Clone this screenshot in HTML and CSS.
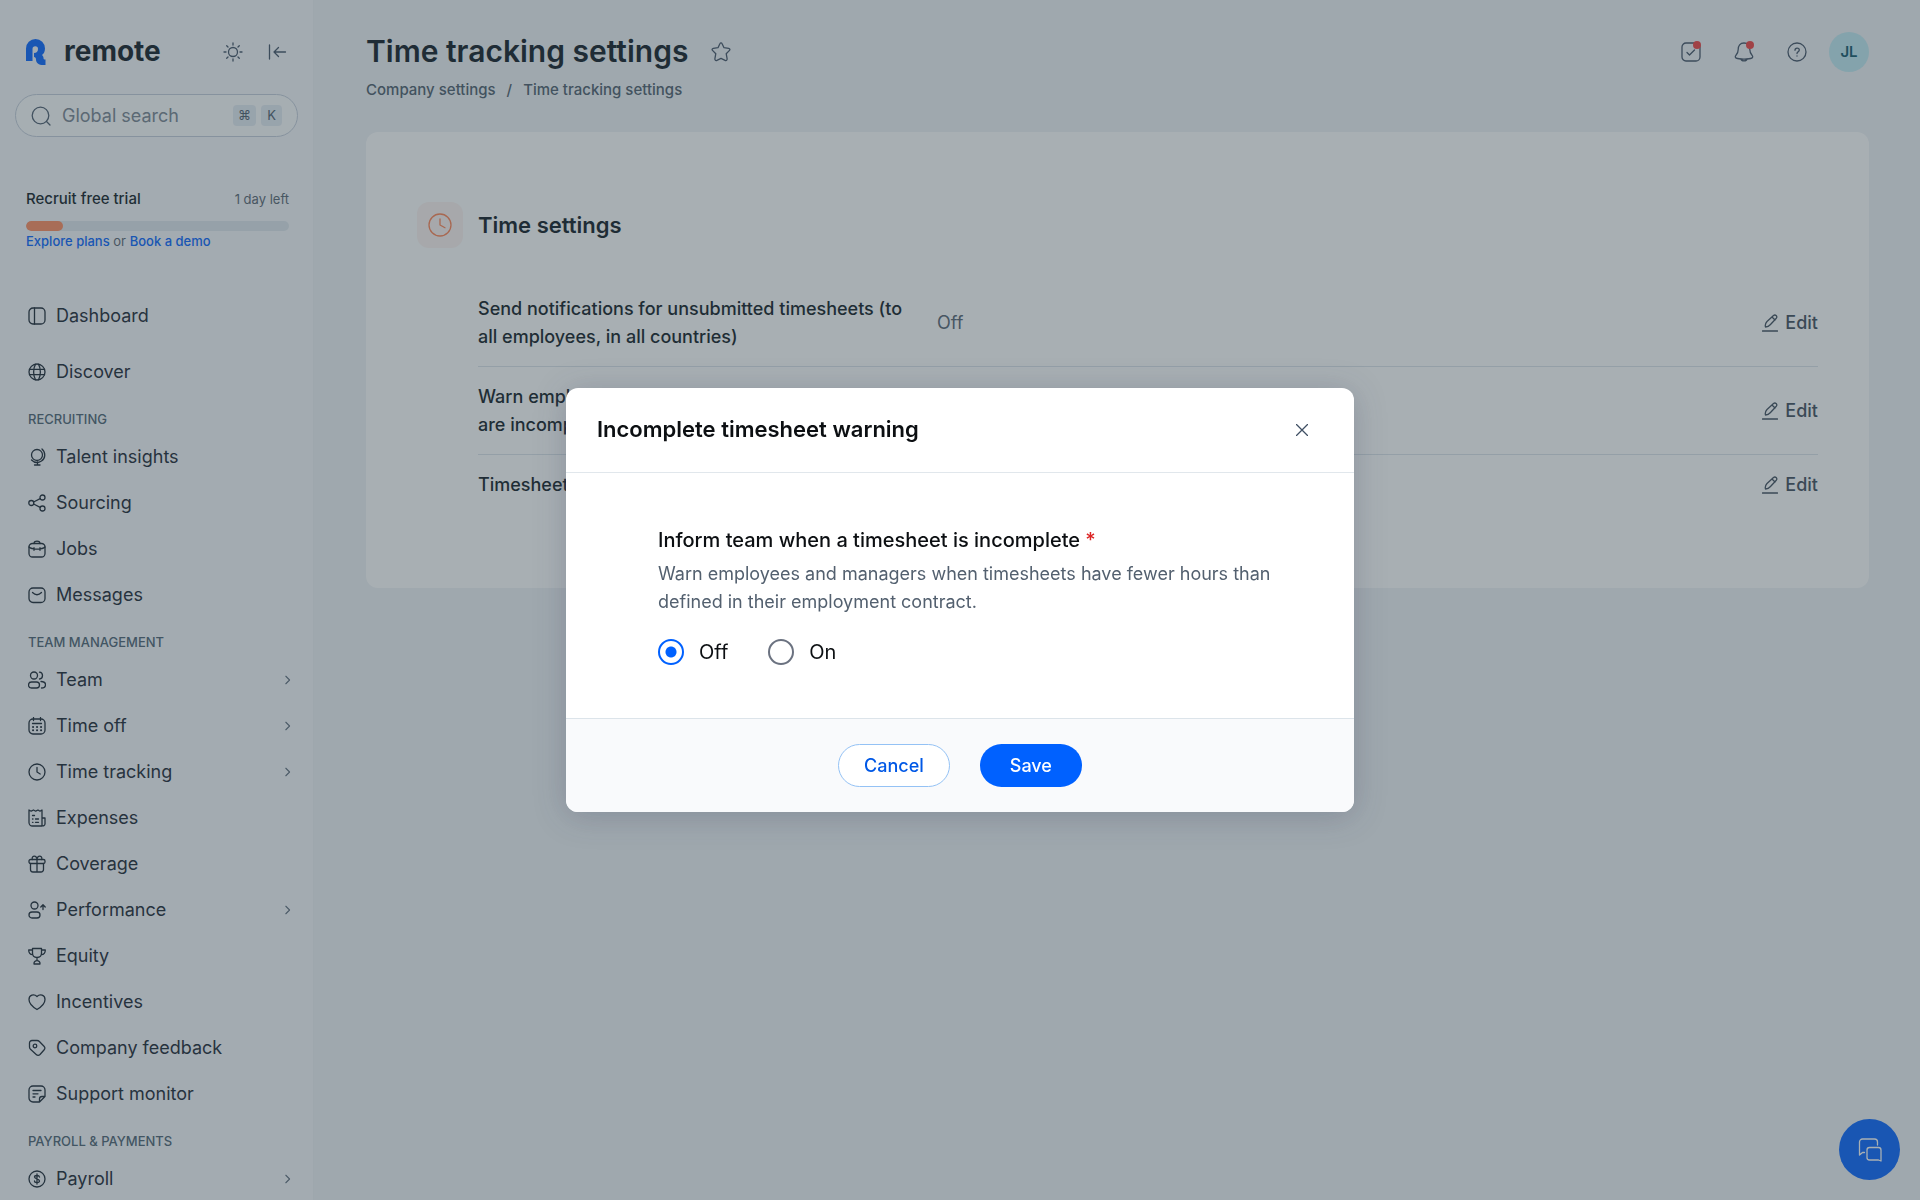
FILE: index.html
```
<!DOCTYPE html>
<html lang="en">
<head>
    <meta charset="UTF-8">
    <meta name="viewport" content="width=device-width, initial-scale=1.0">
    <title>Time tracking settings</title>
    <link rel="stylesheet" href="styles.css">
</head>
<body>
    <div class="app">
        <aside class="sidebar">
            <div class="brand">
                <svg class="brand-mark" viewBox="0 0 20 26"><path d="M0 22V9.500a9.500 9.500 0 0 1 19 0c0 3.500-1.500 5.500-3 6.500 1 .8 1.500 2 1.500 3 0 1 .5 1.500 2 1.500V26h-2c-5 0-7.500-2-7.500-5.500 0-1.500-.7-2.500-2-2.500v-4c2.500 0 4-1.500 4-4a2.700 2.700 0 0 0-5.500 0V22z"/></svg>
                <span class="brand-name">remote</span>
                <button class="icon-btn theme-btn" aria-label="Toggle theme">
                    <svg class="icon" viewBox="0 0 20 20"><circle cx="10" cy="10" r="4.500"/><path d="M10 1v2M10 17v2M1 10h2M17 10h2M3.700 3.700l1.300 1.300M15 15l1.300 1.300M3.700 16.300L5 15M15 5l1.300-1.300"/></svg>
                </button>
                <button class="icon-btn" aria-label="Collapse sidebar">
                    <svg class="icon" viewBox="0 0 20 20"><path d="M2.500 3v14M7 10h11.500M11.500 5.500L7 10l4.500 4.500"/></svg>
                </button>
            </div>

            <div class="search">
                <svg class="icon" viewBox="0 0 20 20"><circle cx="9.500" cy="9.500" r="8.300"/><path d="M15.500 15.500l3.500 3.500"/></svg>
                <input type="text" placeholder="Global search" aria-label="Global search">
                <kbd>⌘</kbd>
                <kbd>K</kbd>
            </div>

            <div class="trial">
                <div class="trial-head">
                    <span class="trial-title">Recruit free trial</span>
                    <span class="trial-left">1 day left</span>
                </div>
                <div class="progress"><div class="progress-fill" style="width: 14%"></div></div>
                <p class="trial-links"><a href="#">Explore plans</a> or <a href="#">Book a demo</a></p>
            </div>

            <nav class="nav">
                <a class="nav-item" href="#">
                    <svg class="icon" viewBox="0 0 18 18"><rect x="1" y="1" width="16" height="16" rx="4"/><path d="M6.500 1v16"/></svg>
                    <span>Dashboard</span>
                </a>
                <a class="nav-item nav-discover" href="#">
                    <svg class="icon" viewBox="0 0 18 18"><circle cx="9" cy="9" r="8"/><path d="M1.500 6.300h15M1.500 11.700h15M7.500 1.200C5 5.500 5 12.500 7.500 16.800M10.500 1.200c2.500 4.300 2.500 11.300 0 15.600"/></svg>
                    <span>Discover</span>
                </a>

                <h2 class="nav-heading">Recruiting</h2>
                <a class="nav-item" href="#">
                    <svg class="icon" viewBox="0 0 18 18"><circle cx="9" cy="7" r="5.500"/><path d="M14 1c4 3.500 3.500 9.500-.5 12-3.500 2.200-7.500 1.500-10-1M9.500 14v3M6.500 17h5.500"/></svg>
                    <span>Talent insights</span>
                </a>
                <a class="nav-item" href="#">
                    <svg class="icon" viewBox="0 0 18 18"><circle cx="3.300" cy="9" r="2.500"/><circle cx="14.500" cy="3.500" r="2.500"/><circle cx="14.500" cy="14.500" r="2.500"/><path d="M5.600 8l6.600-3.300M5.600 10l6.600 3.300"/></svg>
                    <span>Sourcing</span>
                </a>
                <a class="nav-item" href="#">
                    <svg class="icon" viewBox="0 0 18 18"><rect x="1" y="3.500" width="16" height="13.500" rx="3.500"/><path d="M6 3.500c0-3.300 6-3.300 6 0M1 7c2.500 2.700 13.500 2.700 16 0M6 7.700v2.600M12 7.700v2.600"/></svg>
                    <span>Jobs</span>
                </a>
                <a class="nav-item" href="#">
                    <svg class="icon" viewBox="0 0 18 18"><rect x="1" y="2" width="16" height="14.500" rx="4"/><path d="M4.500 6.500c3 3 6 3 9 0"/></svg>
                    <span>Messages</span>
                </a>

                <h2 class="nav-heading">Team management</h2>
                <a class="nav-item" href="#">
                    <svg class="icon" viewBox="0 0 18 18"><circle cx="6" cy="4.500" r="3.500"/><path d="M11.500 1.200c4 .3 4 6.500 0 6.800"/><rect x=".5" y="11" width="11" height="6" rx="3"/><path d="M13 10.500c3 0 4.500 1.200 4.500 3.300S16.500 17 13.500 17"/></svg>
                    <span>Team</span>
                    <svg class="chevron" viewBox="0 0 8 12"><path d="M2 1.500L6.500 6 2 10.500"/></svg>
                </a>
                <a class="nav-item" href="#">
                    <svg class="icon" viewBox="0 0 18 18"><rect x="1" y="2" width="16" height="15" rx="4"/><path d="M5.500.5v3M12.500.5v3M4.500 6.500h9"/><path class="dots" d="M5 10h.1M9 10h.1M13 10h.1M5 13.200h.1M9 13.200h.1M13 13.200h.1"/></svg>
                    <span>Time off</span>
                    <svg class="chevron" viewBox="0 0 8 12"><path d="M2 1.500L6.500 6 2 10.500"/></svg>
                </a>
                <a class="nav-item" href="#">
                    <svg class="icon" viewBox="0 0 18 18"><circle cx="9" cy="9" r="8"/><path d="M9 4.500V9l3.200 2"/></svg>
                    <span>Time tracking</span>
                    <svg class="chevron" viewBox="0 0 8 12"><path d="M2 1.500L6.500 6 2 10.500"/></svg>
                </a>
                <a class="nav-item" href="#">
                    <svg class="icon" viewBox="0 0 18 18"><path d="M1 1l2.200 1.200L5.500 1l2.200 1.200L10 1l2 1.200L14 1v16H4.500A3.500 3.500 0 0 1 1 13.500zM14 9h3v6a2 2 0 0 1-3 1.500M4.500 6.500h2M4.500 10h.5M7.500 10h3M4.500 13.300h.5M7.500 13.300h3"/></svg>
                    <span>Expenses</span>
                </a>
                <a class="nav-item" href="#">
                    <svg class="icon" viewBox="0 0 18 18"><rect x="1" y="4.500" width="16" height="4" rx="1.500"/><path d="M2.500 8.500v6A2.500 2.500 0 0 0 5 17h8a2.500 2.500 0 0 0 2.500-2.500v-6M9 4.500V17M9 4.500C9 0 3.500 0 4.200 4.500M9 4.500C9 0 14.500 0 13.800 4.500"/></svg>
                    <span>Coverage</span>
                </a>
                <a class="nav-item" href="#">
                    <svg class="icon" viewBox="0 0 18 18"><circle cx="6.500" cy="4.500" r="3.500"/><rect x="1" y="11" width="11" height="6" rx="3"/><path d="M15 8.500V4M12.800 6L15 3.800 17.200 6"/></svg>
                    <span>Performance</span>
                    <svg class="chevron" viewBox="0 0 8 12"><path d="M2 1.500L6.500 6 2 10.500"/></svg>
                </a>
                <a class="nav-item" href="#">
                    <svg class="icon" viewBox="0 0 18 18"><path d="M4.500 1.500h9V6c0 6-9 6-9 0zM4.500 3H.7c0 3 1 4.500 4 4.700M13.500 3h3.800c0 3-1 4.500-4 4.700M9 10.500v3M6 17c-.5-4.500 6.500-4.500 6 0z"/></svg>
                    <span>Equity</span>
                </a>
                <a class="nav-item" href="#">
                    <svg class="icon" viewBox="0 0 18 18"><path d="M9 16.500C6.500 15 1 11 1 6.500 1 2 6 .5 9 3.500c3-3 8-1.500 8 3 0 4.500-5.500 8.500-8 10z"/></svg>
                    <span>Incentives</span>
                </a>
                <a class="nav-item" href="#">
                    <svg class="icon" viewBox="0 0 18 18"><path d="M1.500 8V4A2.500 2.500 0 0 1 4 1.500h5c1 0 1.700.3 2.400 1l4.600 4.700c1.200 1.200 1.200 2.600 0 3.800L12 15.500c-1.200 1.200-2.600 1.200-3.800 0L2.500 10.300C1.800 9.600 1.500 9 1.500 8z"/><circle cx="7" cy="7" r="1.800"/></svg>
                    <span>Company feedback</span>
                </a>
                <a class="nav-item" href="#">
                    <svg class="icon" viewBox="0 0 18 18"><path d="M11.500 17H5a4 4 0 0 1-4-4V5a4 4 0 0 1 4-4h8a4 4 0 0 1 4 4v6.500zM11.500 17v-3a2.500 2.500 0 0 1 2.500-2.500h3M5 5.500h8M5 8.800h5M5 12h2"/></svg>
                    <span>Support monitor</span>
                </a>

                <h2 class="nav-heading">Payroll &amp; payments</h2>
                <a class="nav-item" href="#">
                    <svg class="icon" viewBox="0 0 18 18"><circle cx="9" cy="9" r="8"/><path d="M11.500 7c-.3-2-5-2-5 0s5 1.800 5 4-5 2-5 0M9 4v10"/></svg>
                    <span>Payroll</span>
                    <svg class="chevron" viewBox="0 0 8 12"><path d="M2 1.500L6.500 6 2 10.500"/></svg>
                </a>
            </nav>
        </aside>

        <main class="main">
            <header class="topbar">
                <div class="topbar-title">
                    <h1>Time tracking settings</h1>
                    <button class="icon-btn" aria-label="Add to favourites">
                        <svg class="icon" viewBox="0 0 20 20"><path d="M9 1.500c.4-.9 1.600-.9 2 0l2 4.200 4.700.6c1.200.2 1.600 1.300.8 2.100l-3.300 3.300.9 5c.2 1.600-.8 2.200-2 1.600L10 16.300l-4.100 2c-1.200.6-2.200 0-2-1.600l.9-5-3.300-3.300c-.8-.8-.4-1.900.8-2.100L7 5.700z"/></svg>
                    </button>
                </div>
                <div class="topbar-actions">
                    <button class="icon-btn" aria-label="Tasks">
                        <svg class="icon" viewBox="0 0 20 20"><rect x="1" y="1" width="18" height="18" rx="4"/><path d="M6 10.500L8.500 13l5-5"/></svg>
                        <span class="badge"></span>
                    </button>
                    <button class="icon-btn" aria-label="Notifications">
                        <svg class="icon" viewBox="0 0 20 20"><path d="M10 1C6 1 4.200 4 4.200 7.500c0 3-.7 4-2.200 5.700-1.500 1.800-.5 3 1.500 3.300 4 .8 9 .8 13 0 2-.3 3-1.500 1.500-3.300-1.500-1.700-2.200-2.700-2.200-5.700C15.800 4 14 1 10 1zM7 17c.5 2.500 5.500 2.500 6 0"/></svg>
                        <span class="badge"></span>
                    </button>
                    <button class="icon-btn" aria-label="Help">
                        <svg class="icon" viewBox="0 0 20 20"><circle cx="10" cy="10" r="9"/><path d="M8 8.300c0-3 4.300-2.800 4.300-.2 0 1.700-2.300 1.800-2.300 3.500M10 13.800v.3"/></svg>
                    </button>
                    <button class="avatar">JL</button>
                </div>
            </header>

            <nav class="breadcrumb" aria-label="Breadcrumb">
                <a href="#">Company settings</a>
                <span>/</span>
                <a href="#">Time tracking settings</a>
            </nav>

            <section class="card">
                <div class="card-head">
                    <div class="card-icon">
                        <svg class="icon" viewBox="0 0 24 24"><circle cx="12" cy="12" r="11"/><path d="M12 6v6l5 2.700"/></svg>
                    </div>
                    <h2>Time settings</h2>
                </div>
                <div class="settings">
                    <div class="setting">
                        <div class="setting-label">Send notifications for unsubmitted timesheets (to all employees, in all countries)</div>
                        <div class="setting-value">Off</div>
                        <button class="edit-btn">
                            <svg class="icon" viewBox="0 0 16 18"><path d="M3.500 13c-.8-2.500.2-4 1.500-5.500L11.500 1.500c1.800-1.500 4.300.8 2.800 2.700L8.500 10.500c-1.500 1.700-2.700 2.500-5 2.500zM10 3l3 3M.5 17h15"/></svg>
                            Edit
                        </button>
                    </div>
                    <div class="setting">
                        <div class="setting-label">Warn employees and managers when timesheets are incomplete</div>
                        <div class="setting-value">Off</div>
                        <button class="edit-btn">
                            <svg class="icon" viewBox="0 0 16 18"><path d="M3.500 13c-.8-2.500.2-4 1.500-5.500L11.500 1.500c1.800-1.500 4.300.8 2.800 2.700L8.500 10.500c-1.500 1.700-2.700 2.500-5 2.500zM10 3l3 3M.5 17h15"/></svg>
                            Edit
                        </button>
                    </div>
                    <div class="setting">
                        <div class="setting-label">Timesheet approval</div>
                        <div class="setting-value">Off</div>
                        <button class="edit-btn">
                            <svg class="icon" viewBox="0 0 16 18"><path d="M3.500 13c-.8-2.500.2-4 1.500-5.500L11.500 1.500c1.800-1.500 4.300.8 2.800 2.700L8.500 10.500c-1.500 1.700-2.700 2.500-5 2.500zM10 3l3 3M.5 17h15"/></svg>
                            Edit
                        </button>
                    </div>
                </div>
            </section>
        </main>
    </div>

    <button class="chat-btn" aria-label="Open chat">
        <svg class="icon" viewBox="0 0 24 24"><path d="M6.500 14.500H4.500L1.500 17V4a3 3 0 0 1 3-3h12a3 3 0 0 1 3 3v3M11.500 9.500h9A2.500 2.500 0 0 1 23 12v11l-2.500-1h-9A2.500 2.500 0 0 1 9 19.500V12a2.500 2.500 0 0 1 2.500-2.500z"/></svg>
    </button>

    <div class="overlay">
        <form class="modal" role="dialog" aria-labelledby="modal-title">
            <div class="modal-header">
                <h2 id="modal-title">Incomplete timesheet warning</h2>
                <button type="button" class="icon-btn close-btn" aria-label="Close">
                    <svg class="icon" viewBox="0 0 12 12"><path d="M.5.5l11 11M11.500.5l-11 11"/></svg>
                </button>
            </div>
            <fieldset class="modal-body">
                <legend>Inform team when a timesheet is incomplete <span class="required">*</span></legend>
                <p>Warn employees and managers when timesheets have fewer hours than defined in their employment contract.</p>
                <div class="radios">
                    <label><input type="radio" name="warning" value="off" checked>Off</label>
                    <label><input type="radio" name="warning" value="on">On</label>
                </div>
            </fieldset>
            <div class="modal-footer">
                <button type="button" class="btn btn-outline">Cancel</button>
                <button type="submit" class="btn btn-primary">Save</button>
            </div>
        </form>
    </div>
</body>
</html>
```

FILE: styles.css
```
* {
    margin: 0;
    padding: 0;
    box-sizing: border-box;
}

body {
    font-family: 'Inter', sans-serif;
    font-size: 18px;
    line-height: 28px;
    color: #0c1620;
    background: #eff2f6;
}

button,
input {
    font: inherit;
    color: inherit;
}

button {
    border: none;
    background: none;
    cursor: pointer;
}

a {
    color: inherit;
    text-decoration: none;
}

h1,
h2 {
    font-weight: 600;
}

.icon,
.chevron {
    display: block;
    flex: none;
    width: 20px;
    height: 20px;
    fill: none;
    stroke: currentColor;
    stroke-width: 1.3;
    stroke-linecap: round;
    stroke-linejoin: round;
}

.icon-btn {
    position: relative;
    color: #3f4f63;
}

.app {
    display: flex;
    height: 100vh;
    overflow: hidden;
}

/* Sidebar */
.sidebar {
    flex: none;
    width: 314px;
    padding: 26px 15px 0;
    background: #f6f8fc;
    border-right: 1px solid #edf0f4;
    overflow: hidden;
}

.brand {
    display: flex;
    align-items: center;
    height: 52px;
    padding: 0 11px;
}

.brand-mark {
    width: 20px;
    height: 26px;
    fill: #0061ff;
}

.brand-name {
    margin: 0 auto 2px 18px;
    font-size: 28px;
    font-weight: 700;
}

.theme-btn {
    margin-right: 24px;
}

.search {
    display: flex;
    align-items: center;
    height: 43px;
    margin-top: 16px;
    padding: 0 15px;
    border: 1px solid #c3ccd9;
    border-radius: 22px;
    background: #fcfdfe;
    color: #4a5a6c;
}

.search input {
    flex: 1;
    min-width: 0;
    margin-left: 11px;
    border: none;
    outline: none;
    background: none;
}

.search input::placeholder {
    color: #76828f;
    opacity: 1;
}

.search kbd {
    min-width: 21px;
    margin-left: 5px;
    padding: 0 5px;
    border-radius: 4px;
    background: #e3ebf2;
    font-family: 'Inter', 'DejaVu Sans', sans-serif;
    font-size: 13px;
    line-height: 21px;
    text-align: center;
}

.trial {
    margin-top: 50px;
    padding: 0 9px 0 11px;
    font-size: 13px;
    line-height: 20px;
    color: #55636f;
}

.trial-head {
    display: flex;
    justify-content: space-between;
    align-items: center;
    height: 24px;
}

.trial-title {
    font-size: 15px;
    font-weight: 500;
    color: #0c1620;
}

.progress {
    height: 10px;
    margin-top: 10px;
    border-radius: 5px;
    background: #dfe7ed;
    overflow: hidden;
}

.progress-fill {
    height: 100%;
    border-radius: 5px;
    background: #ff8a5c;
}

.trial-links a {
    font-weight: 500;
    color: #0061ff;
}

.nav {
    margin-top: 42px;
    padding: 0 7px 0 13px;
}

.nav-item {
    display: flex;
    align-items: center;
    gap: 10px;
    height: 46px;
    color: #16222f;
}

.nav-item .icon {
    width: 18px;
    height: 18px;
}

.nav-item .dots {
    stroke-width: 2;
}

.nav-item .chevron {
    width: 7px;
    height: 10px;
    margin-left: auto;
    color: #5a6877;
}

.nav-discover {
    margin-top: 10px;
}

.nav-heading {
    margin: 14px 0 5px;
    font-size: 13px;
    font-weight: 500;
    line-height: 20px;
    text-transform: uppercase;
    color: #4a5f70;
}

/* Page */
.main {
    flex: 1;
    min-width: 0;
    padding: 26px 51px 0 52px;
}

.topbar,
.topbar-title,
.topbar-actions {
    display: flex;
    align-items: center;
}

.topbar {
    justify-content: space-between;
    height: 52px;
}

.topbar-title {
    gap: 23px;
}

.topbar-title h1 {
    padding-bottom: 2px;
    font-size: 30px;
    line-height: 48px;
}

.topbar-actions {
    gap: 33px;
}

.badge {
    position: absolute;
    top: -1px;
    right: 0;
    width: 8px;
    height: 8px;
    border-radius: 50%;
    background: #f03e3e;
}

.avatar {
    width: 40px;
    height: 40px;
    margin-left: -11px;
    border-radius: 50%;
    background: #bfeaf2;
    font-size: 15px;
    font-weight: 600;
    color: #0b5468;
}

.breadcrumb {
    display: flex;
    gap: 11px;
    font-size: 15px;
    font-weight: 500;
    line-height: 24px;
    color: #4a5a69;
}

.card {
    margin-top: 30px;
    padding: 70px 51px 74px;
    border-radius: 12px;
    background: #fff;
}

.card-head {
    display: flex;
    align-items: center;
    gap: 15px;
}

.card-head h2 {
    font-size: 22px;
}

.card-icon {
    display: grid;
    place-items: center;
    width: 46px;
    height: 46px;
    border-radius: 12px;
    background: #fdf3f1;
    color: #ff8050;
}

.card-icon .icon {
    width: 24px;
    height: 24px;
}

.settings {
    margin: 31px 0 0 61px;
}

.setting {
    display: grid;
    grid-template-columns: 427px 1fr auto;
    column-gap: 32px;
    align-items: center;
    padding: 16px 0 15px;
    border-bottom: 1px solid #dbe3e9;
}

.setting:last-child {
    border-bottom: none;
}

.setting-label {
    font-weight: 500;
}

.setting-value {
    color: #53606f;
}

.edit-btn {
    display: flex;
    align-items: center;
    gap: 7px;
    font-weight: 500;
    color: #3c4a5a;
}

.edit-btn .icon {
    width: 16px;
    height: 18px;
}

.chat-btn {
    position: fixed;
    right: 20px;
    bottom: 20px;
    display: grid;
    place-items: center;
    width: 61px;
    height: 61px;
    border-radius: 50%;
    background: #0061ff;
    color: #fff;
}

.chat-btn .icon {
    width: 24px;
    height: 24px;
}

/* Dialog */
.overlay {
    position: fixed;
    inset: 0;
    display: flex;
    align-items: center;
    justify-content: center;
    background: rgba(58, 72, 82, 0.44);
}

.modal {
    width: 788px;
    max-width: 90%;
    border-radius: 12px;
    background: #fff;
    color: #0c0f12;
    box-shadow: 0 4px 32px rgba(50, 60, 90, 0.25);
    overflow: hidden;
}

.modal-header {
    display: flex;
    align-items: center;
    justify-content: space-between;
    height: 85px;
    padding: 0 46px 0 31px;
    border-bottom: 1px solid #e1e7ec;
}

.modal-header h2 {
    padding-bottom: 2px;
    font-size: 22px;
}

.close-btn .icon {
    width: 12px;
    height: 12px;
}

.modal-body {
    padding: 53px 70px 53px 92px;
    border: none;
}

.modal-body legend {
    float: left;
    width: 100%;
    font-size: 20px;
    font-weight: 500;
}

.required {
    color: #dc2626;
}

.modal-body p {
    clear: both;
    padding-top: 6px;
    color: #53606f;
}

.radios {
    display: flex;
    gap: 40px;
    margin-top: 23px;
    font-size: 20px;
    line-height: 26px;
}

.radios label {
    display: flex;
    align-items: center;
    gap: 15px;
}

.radios input {
    appearance: none;
    width: 26px;
    height: 26px;
    border: 2px solid #6b7280;
    border-radius: 50%;
}

.radios input:checked {
    border-color: #0061ff;
    background: radial-gradient(circle, #0061ff 5px, transparent 6px);
}

.modal-footer {
    display: flex;
    justify-content: center;
    gap: 30px;
    padding: 25px;
    border-top: 1px solid #dce4ea;
    background: #f9fafc;
}

.btn {
    height: 43px;
    padding: 0 30px;
    border-radius: 22px;
    font-weight: 500;
}

.btn-outline {
    padding: 0 25px;
    border: 1px solid #94c2f5;
    background: #fff;
    color: #0058e6;
}

.btn-primary {
    background: #0061ff;
    color: #fff;
}
```
